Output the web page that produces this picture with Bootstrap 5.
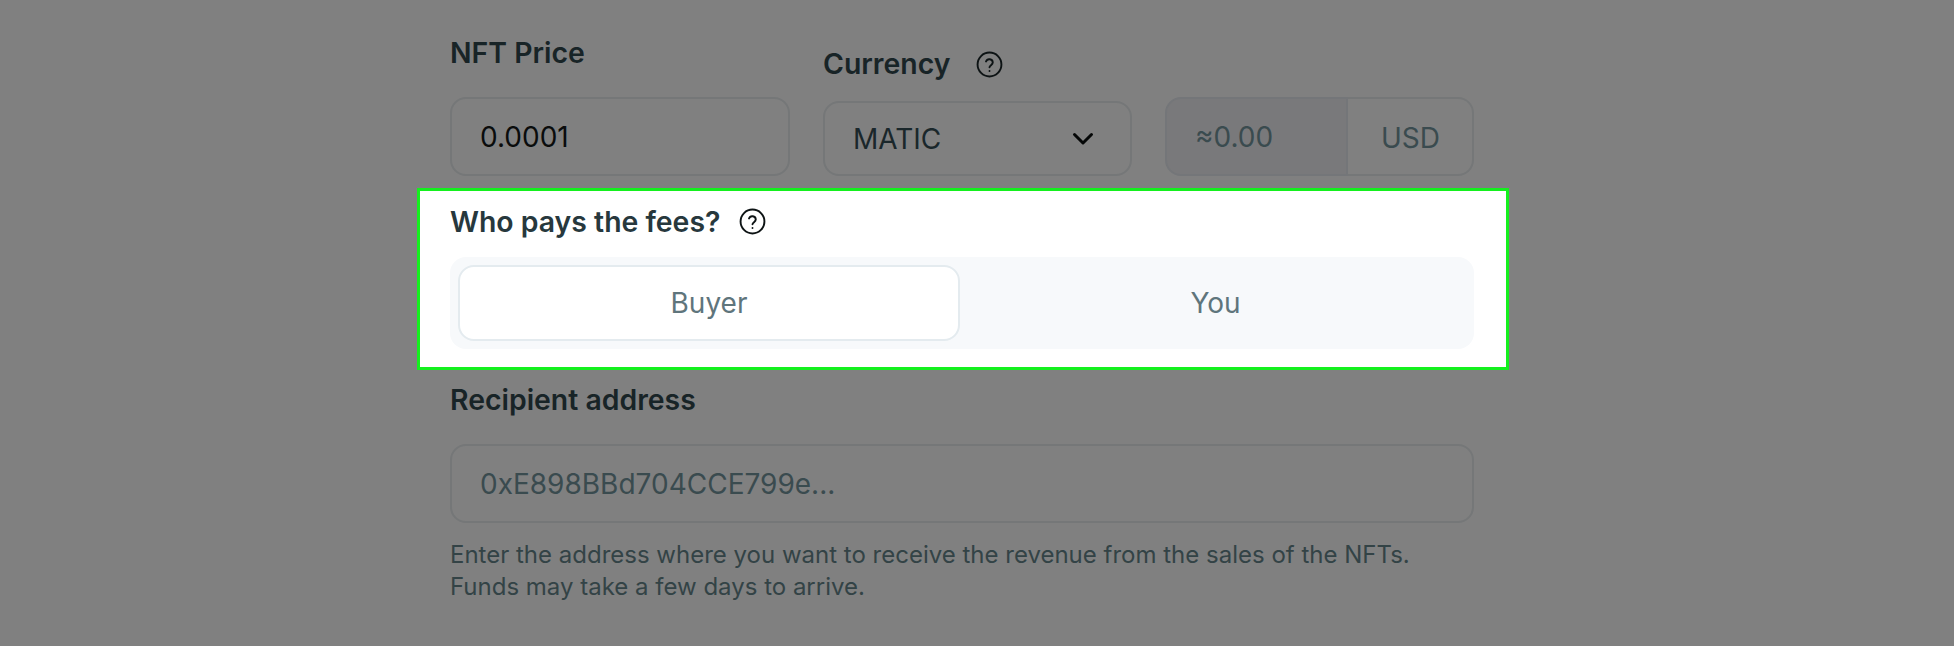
<!DOCTYPE html>
<html lang="en">
<head>
<meta charset="utf-8">
<title>NFT price</title>
<link href="https://cdn.jsdelivr.net/npm/bootstrap@5.3.0/dist/css/bootstrap.min.css" rel="stylesheet">
<style>
html,body{height:100%;}
body{background:#808080;font-family:"Inter","Liberation Sans",sans-serif;overflow:hidden;}
.sheet{width:1092px;margin-left:417px;}
.pad{padding-left:33px;padding-right:35px;}
.top-row{padding-top:30px;padding-bottom:12px;height:188px;gap:33px;}
.fld-label{font-size:28.4px;font-weight:600;line-height:32px;color:#182427;margin:0;}
.help-ic{width:27px;height:27px;flex:none;}
.price-label{margin-bottom:28px;}
.cur-head{gap:26px;margin-bottom:21px;}
.fld-box.form-control{height:79px;border:2px solid #757778;border-radius:16px;background:#808080;font-size:28px;line-height:34px;padding:21px 28px;color:#0a0c0c;box-shadow:none;}
.price-col{width:340px;flex:none;}
.cur-col{width:309px;flex:none;}
.cur-box.form-control{height:75px;color:#1a272b;padding:19px 36px 19px 28px;}
.usd-col{flex:1 1 0;min-width:0;}
.usd-group{height:79px;}
.usd-group .fld-box{background:#79797b;color:#3a4b4f;border-color:#747679;border-top-right-radius:0;border-bottom-right-radius:0;}
.usd-tail.input-group-text{background:#808080;border:2px solid #757778;border-left:1px solid #707376;border-radius:0 16px 16px 0;font-size:28px;color:#3a4b4f;padding:3px 32px 0 33px;}
.panel{background:#fff;border:3px solid #14f01e;height:182px;padding:0 32px 0 30px;}
.panel .fld-label{color:#27383d;}
.panel-head{padding-bottom:5px;height:66px;gap:19px;}
.fee-track{background:#f7f9fb;border-radius:16px;height:92px;padding:8px;}
.fee-track .btn{flex:1 1 0;font-size:28px;color:#5f757c;border:0;border-radius:16px;padding:0 0 0 5px;}
.fee-track .btn.fee-on{background:#fff;border:2px solid #e4ebef;flex:0 0 502px;padding:0;}
.addr-sec{padding-top:14px;}
.addr-label{margin-bottom:28px;}
.addr-box.form-control{color:#3a4b4f;}
.hint{font-size:24px;line-height:32px;color:#334346;margin:16px 0 0;}
</style>
</head>
<body>
<main class="sheet">
  <div class="d-flex align-items-end pad top-row">
    <div class="price-col">
      <p class="fld-label price-label">NFT Price</p>
      <div class="form-control fld-box">0.0001</div>
    </div>
    <div class="cur-col">
      <div class="d-flex align-items-center cur-head">
        <p class="fld-label">Currency</p>
        <svg class="help-ic" viewBox="0 0 24 24" fill="none" stroke="#0d1314" stroke-width="1.7" stroke-linecap="round" stroke-linejoin="round"><circle cx="12" cy="12" r="10.6"/><path d="M8.9 9.3a3.1 3.1 0 0 1 6 1c0 2-2.9 2.5-2.9 4.2"/><path d="M12 17.8h.01"/></svg>
      </div>
      <div class="form-control fld-box cur-box d-flex align-items-center justify-content-between">
        <span>MATIC</span>
        <svg width="22" height="14" viewBox="0 0 22 14" fill="none" stroke="#050707" stroke-width="3" stroke-linecap="round" stroke-linejoin="round"><path d="M2.5 2.5 11 11l8.5-8.5"/></svg>
      </div>
    </div>
    <div class="usd-col">
      <div class="input-group flex-nowrap usd-group">
        <div class="form-control fld-box">≈0.00</div>
        <span class="input-group-text usd-tail">USD</span>
      </div>
    </div>
  </div>
  <section class="panel">
    <div class="d-flex align-items-center panel-head">
      <p class="fld-label">Who pays the fees?</p>
      <svg class="help-ic" viewBox="0 0 24 24" fill="none" stroke="#0d1314" stroke-width="1.7" stroke-linecap="round" stroke-linejoin="round"><circle cx="12" cy="12" r="10.6"/><path d="M8.9 9.3a3.1 3.1 0 0 1 6 1c0 2-2.9 2.5-2.9 4.2"/><path d="M12 17.8h.01"/></svg>
    </div>
    <div class="d-flex fee-track">
      <button type="button" class="btn fee-on">Buyer</button>
      <button type="button" class="btn">You</button>
    </div>
  </section>
  <section class="addr-sec pad">
    <p class="fld-label addr-label">Recipient address</p>
    <div class="form-control fld-box addr-box">0xE898BBd704CCE799e...</div>
    <p class="hint">Enter the address where you want to receive the revenue from the sales of the NFTs.<br>Funds may take a few days to arrive.</p>
  </section>
</main>
<script src="https://cdn.jsdelivr.net/npm/bootstrap@5.3.0/dist/js/bootstrap.bundle.min.js"></script>
</body>
</html>
